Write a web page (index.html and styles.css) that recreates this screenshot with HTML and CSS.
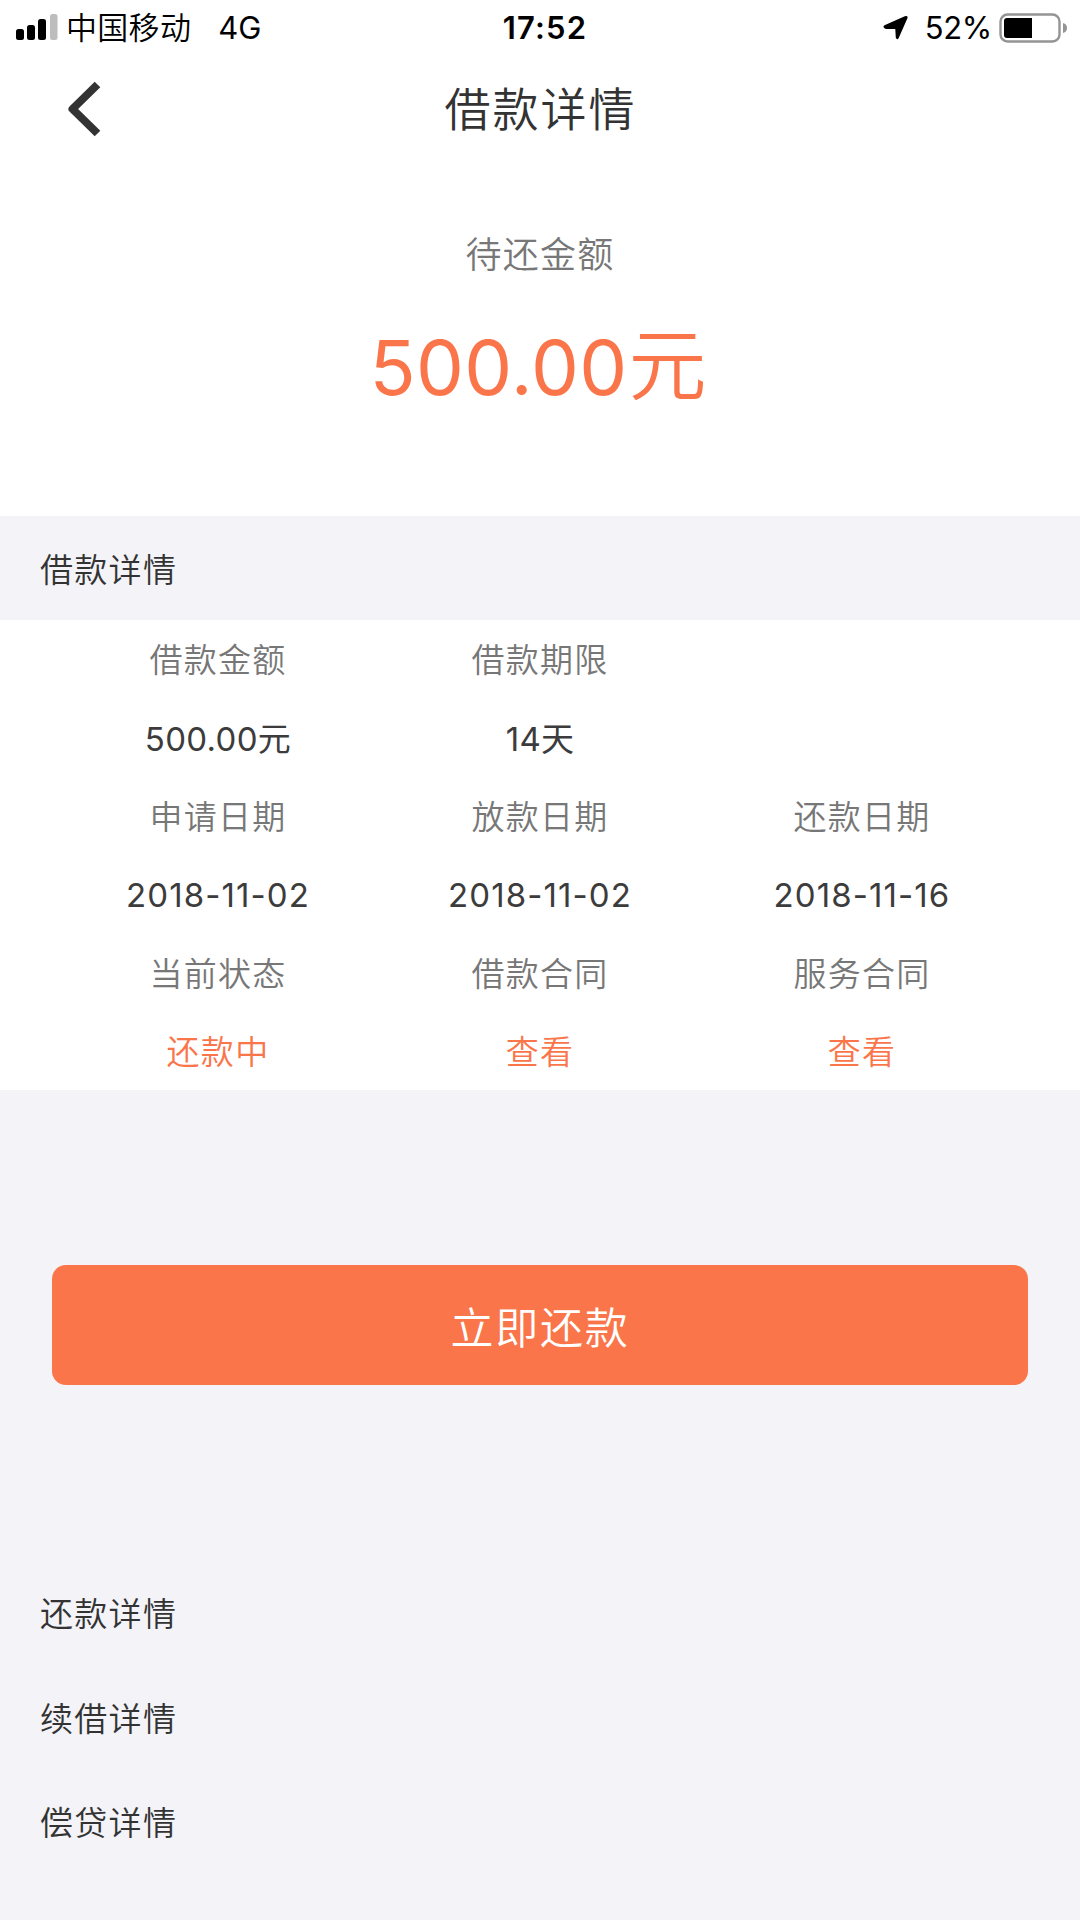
FILE: index.html
```html
<!DOCTYPE html>
<html lang="zh-CN">
<head>
<meta charset="utf-8">
<title>借款详情</title>
<link rel="stylesheet" href="styles.css">
</head>
<body>
<div class="status-bar">
  <div class="status-left">
    <svg class="signal" width="42" height="28" viewBox="0 0 42 28">
      <rect x="0" y="15" width="8" height="11" rx="2.5"/>
      <rect x="11" y="11" width="8" height="15" rx="2.5"/>
      <rect x="22" y="5" width="8" height="21" rx="2.5"/>
      <rect x="34" y="0" width="7.5" height="26" rx="2.5" fill="#bdbdbd"/>
    </svg>
    <span class="carrier">中国移动</span>
    <span class="network">4G</span>
  </div>
  <div class="clock">17:52</div>
  <div class="status-right">
    <svg class="location" width="26" height="26" viewBox="0 0 26 26">
      <path d="M1.500 10.200 21.800 1.200Q25.200 .2 24.400 3.200L15.600 23.200Q14 25.500 12.800 22.800L12.300 14H3Q-1.200 12.200 1.500 10.200Z"/>
    </svg>
    <span class="percent">52%</span>
    <svg class="battery" width="69" height="32" viewBox="0 0 69 32">
      <rect x="1.5" y="2.500" width="59" height="27" rx="7" fill="none" stroke="#949494" stroke-width="2.4"/>
      <path d="M8 6H33V26H8Q5 26 5 23V9Q5 6 8 6Z"/>
      <path d="M64 11Q68 12 68 16T64 21Z" fill="#949494"/>
    </svg>
  </div>
</div>

<header class="nav">
  <svg class="back" width="38" height="58" viewBox="0 0 38 58">
    <path d="M31.500 4.500 6.500 29 31.500 53.500" fill="none" stroke="#333" stroke-width="8" stroke-linejoin="round"/>
  </svg>
  <h1 class="nav-title">借款详情</h1>
</header>

<section class="summary">
  <div class="summary-label">待还金额</div>
  <div class="summary-amount"><span class="digits">500.00</span><span class="unit">元</span></div>
</section>

<h2 class="section-title">借款详情</h2>
<div class="details">
  <div class="label">借款金额</div><div class="label">借款期限</div><div></div>
  <div class="value">500.00元</div><div class="value">14天</div><div></div>
  <div class="label">申请日期</div><div class="label">放款日期</div><div class="label">还款日期</div>
  <div class="value date">2018-11-02</div><div class="value date">2018-11-02</div><div class="value date">2018-11-16</div>
  <div class="label">当前状态</div><div class="label">借款合同</div><div class="label">服务合同</div>
  <div class="value accent">还款中</div><a class="value accent">查看</a><a class="value accent">查看</a>
</div>

<button class="repay">立即还款</button>

<h2 class="section-title">还款详情</h2>
<h2 class="section-title">续借详情</h2>
<h2 class="section-title">偿贷详情</h2>
</body>
</html>
```
FILE: styles.css
```css
* {
  box-sizing: border-box;
}

body {
  margin: 0;
  min-height: 1920px;
  background: #f3f3f8;
  color: #333;
  font-family: Inter, "Noto Sans CJK SC", sans-serif;
  font-size: 33px;
  font-weight: 350;
  overflow-x: hidden;
}

svg {
  display: block;
}

.status-bar {
  display: grid;
  grid-template-columns: 1fr auto 1fr;
  align-items: center;
  height: 54px;
  padding: 0 12px 0 16px;
  background: #fff;
  color: #000;
  font-size: 31px;
  line-height: 55px;
}

.status-left,
.status-right {
  display: flex;
  align-items: center;
}

.status-right {
  justify-content: flex-end;
}

.carrier {
  margin-left: 8px;
  letter-spacing: 0.300px;
}

.network {
  margin-left: 27px;
  font-weight: 400;
}

.clock {
  padding-left: 6px;
  font-size: 31px;
  font-weight: 600;
  letter-spacing: 1.200px;
}

.percent {
  margin: 0 7px 0 16px;
  font-weight: 400;
  letter-spacing: -0.300px;
}

.nav {
  display: grid;
  grid-template-columns: 130px 1fr 130px;
  align-items: center;
  height: 110px;
  background: #fff;
}

.back {
  margin-left: 66px;
}

.nav-title {
  margin: 0;
  padding: 0 0 6px 1px;
  font-size: 46px;
  font-weight: 350;
  letter-spacing: 2px;
  text-align: center;
}

.summary {
  height: 352px;
  padding-top: 61px;
  background: #fff;
  text-align: center;
}

.summary-label {
  color: #777;
  font-size: 36px;
  letter-spacing: 1.200px;
  line-height: 60px;
}

.summary-amount {
  display: flex;
  justify-content: center;
  margin-top: 27px;
  padding-right: 4px;
  color: #fa764a;
  font-size: 76px;
  line-height: 110px;
}

.digits {
  font-weight: 400;
  letter-spacing: 0.300px;
}

.unit {
  margin-left: 1px;
  font-size: 78px;
  line-height: 108px;
}

.section-title {
  margin: 0;
  padding: 2px 0 0 40px;
  height: 104.400px;
  font-size: 33px;
  font-weight: 350;
  letter-spacing: 1.300px;
  line-height: 104px;
}

.details {
  display: grid;
  grid-template-columns: repeat(3, 1fr);
  grid-auto-rows: 78.300px;
  padding: 0 57px;
  background: #fff;
  line-height: 80px;
  text-align: center;
}

.label {
  color: #777;
  letter-spacing: 1.300px;
}

.value {
  color: #3c3c3c;
  font-weight: 400;
  letter-spacing: 0.300px;
}

.date {
  letter-spacing: 1.100px;
}

.accent {
  color: #fa764a;
  font-weight: 350;
  letter-spacing: 1.300px;
}

.repay {
  display: block;
  width: 976px;
  height: 120px;
  margin: 175px auto 175px;
  padding: 0 0 1px;
  border: 0;
  border-radius: 14px;
  background: #fa764a;
  color: #fff;
  font-family: inherit;
  font-size: 43px;
  font-weight: 350;
  letter-spacing: 1.700px;
}
```
